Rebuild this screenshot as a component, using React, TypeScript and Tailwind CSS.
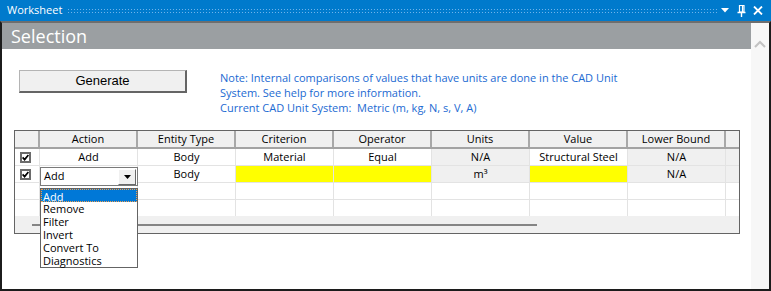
import React from 'react'

const columns = ['Action', 'Entity Type', 'Criterion', 'Operator', 'Units', 'Value', 'Lower Bound']

const actions = ['Add', 'Remove', 'Filter', 'Invert', 'Convert To', 'Diagnostics']

type CellData = { text: string; bg: string }

const rows: { checked: boolean; cells: CellData[]; extra: string }[] = [
  {
    checked: true,
    cells: [
      { text: 'Add', bg: 'bg-white' },
      { text: 'Body', bg: 'bg-white' },
      { text: 'Material', bg: 'bg-white' },
      { text: 'Equal', bg: 'bg-white' },
      { text: 'N/A', bg: 'bg-[#f0f0f0]' },
      { text: 'Structural Steel', bg: 'bg-white' },
      { text: 'N/A', bg: 'bg-[#f0f0f0]' },
    ],
    extra: 'bg-[#f0f0f0]',
  },
  {
    checked: true,
    cells: [
      { text: '', bg: 'bg-white' },
      { text: 'Body', bg: 'bg-white' },
      { text: '', bg: 'bg-[#ffff00]' },
      { text: '', bg: 'bg-[#ffff00]' },
      { text: 'm³', bg: 'bg-[#f0f0f0]' },
      { text: '', bg: 'bg-[#ffff00]' },
      { text: 'N/A', bg: 'bg-[#f0f0f0]' },
    ],
    extra: 'bg-[#f0f0f0]',
  },
  { checked: false, cells: columns.map(() => ({ text: '', bg: 'bg-white' })), extra: 'bg-white' },
  { checked: false, cells: columns.map(() => ({ text: '', bg: 'bg-white' })), extra: 'bg-white' },
]

function CheckBox() {
  return (
    <div className="w-[11px] h-[11px] border-2 border-[#6b6b6b] bg-white flex items-center justify-center">
      <svg width="7" height="7" viewBox="0 0 7 7">
        <path d="M0.6 3.4 L2.6 5.6 L6.4 1" stroke="#000" strokeWidth="1.7" fill="none" />
      </svg>
    </div>
  )
}

function App() {
  return (
    <div className="w-[771px] h-[291px] flex flex-col bg-white overflow-hidden font-['Open_Sans',sans-serif] text-[11px] text-black">
      {/* Title bar */}
      <div className="h-[21px] bg-[#007acc] flex items-center text-white shrink-0">
        <span className="pl-[7px] text-[11px]">Worksheet</span>
        <div className="flex-1 h-[5px] ml-[5px] mr-[4px] bg-[radial-gradient(#6fb3ea_0.7px,transparent_0.8px)] bg-[length:3px_3px]" />
        <svg width="8" height="5" viewBox="0 0 8 5" className="mr-[8px]">
          <path d="M0 0 H8 L4 4.5 Z" fill="#fff" />
        </svg>
        <svg width="9" height="12" viewBox="0 0 9 12" className="mr-[7px]">
          <path d="M2.5 0.5 H7 V7 H2.5 Z M5.5 0.5 V7" stroke="#fff" strokeWidth="1.2" fill="none" />
          <path d="M0.5 7.5 H8.5 M4.5 7.5 V12" stroke="#fff" strokeWidth="1.4" fill="none" />
        </svg>
        <svg width="10" height="9" viewBox="0 0 10 9" className="mr-[8px]">
          <path d="M1 0.5 L9 8.5 M9 0.5 L1 8.5" stroke="#fff" strokeWidth="1.8" fill="none" />
        </svg>
      </div>

      <div className="flex-1 flex border-2 border-[#1c1c1c] border-t-[#6e6e6e] min-h-0">
        <div className="flex-1 flex flex-col">
          {/* Section header */}
          <div className="h-[26px] bg-[#9b9fa2] flex items-center pl-[9px] text-white text-[18px] shrink-0">
            Selection
          </div>

          <div className="flex items-start mt-[21px] ml-[17px] shrink-0">
            <button className="w-[168px] h-[23px] bg-[#f0f0f0] border-l border-t border-[#b4b4b4] border-r-2 border-b-2 border-r-[#656565] border-b-[#656565] font-['Liberation_Sans',Arial,sans-serif] text-[13px] text-black">
              Generate
            </button>
            <div className="ml-[33px] text-[#1b6ad2] leading-[15px] text-[11px]">
              <div>Note: Internal comparisons of values that have units are done in the CAD Unit</div>
              <div>System. See help for more information.</div>
              <div>Current CAD Unit System:&nbsp; Metric (m, kg, N, s, V, A)</div>
            </div>
          </div>

          {/* Grid */}
          <div className="relative ml-[12px] mt-[15px] w-[726px] h-[104px] border border-[#646464] flex flex-col shrink-0">
            <div className="h-[18px] flex bg-[#f0f0f0] border-b-2 border-[#a3a3a3] shrink-0">
              <div className="w-[25px] h-full border-r-2 border-[#a8a8a8]" />
              {columns.map((c) => (
                <div key={c} className="w-[98px] h-full border-r-2 border-[#a8a8a8] flex items-center justify-center">
                  {c}
                </div>
              ))}
              <div className="w-[13px] h-full" />
            </div>

            <div className="flex-1 overflow-hidden">
              {rows.map((r, i) => (
                <div key={i} className="h-[17px] flex">
                  <div className="w-[25px] h-full border-r border-b border-[#e3e3e3] flex items-center pl-[5px]">
                    {r.checked && <CheckBox />}
                  </div>
                  {r.cells.map((c, j) => (
                    <div
                      key={j}
                      className={`w-[98px] h-full border-r border-b border-[#e3e3e3] flex items-center justify-center ${c.bg}`}
                    >
                      {c.text}
                    </div>
                  ))}
                  <div className={`w-[13px] h-full border-b border-[#e3e3e3] ${r.extra}`} />
                </div>
              ))}
            </div>

            <div className="h-[17px] bg-[#f0f0f0] flex items-center pl-[17px] shrink-0">
              <div className="w-[505px] h-[2px] bg-[#858585]" />
            </div>

            {/* Action combobox */}
            <div className="absolute left-[25px] top-[36px] w-[98px] h-[19px] bg-white border border-[#7a7a7a] flex items-center">
              <span className="pl-[3px] flex-1">Add</span>
              <div className="w-[18px] h-[16px] mr-[1px] bg-[#f0f0f0] border-l border-t border-white border-r border-b border-r-[#696969] border-b-[#696969] flex items-center justify-center">
                <svg width="7" height="4" viewBox="0 0 7 4">
                  <path d="M0 0 H7 L3.5 4 Z" fill="#000" />
                </svg>
              </div>
            </div>

            {/* Dropdown list */}
            <div className="absolute left-[25px] top-[57px] w-[98px] h-[80px] bg-white border border-[#646464] z-10 leading-[13px]">
              {actions.map((a, i) => (
                <div
                  key={a}
                  className={
                    i === 0
                      ? 'h-[13px] bg-[#0078d7] text-white pl-[1px] border border-dotted border-[#f0a050]'
                      : 'h-[13px] pl-[2px]'
                  }
                >
                  {a}
                </div>
              ))}
            </div>
          </div>
        </div>

        {/* Vertical scrollbar */}
        <div className="w-[18px] bg-[#f7f7f7] flex justify-center pt-[17px]">
          <svg width="12" height="8" viewBox="0 0 12 8">
            <path d="M1 7 L6 2 L11 7" stroke="#c2c2c2" strokeWidth="2" fill="none" />
          </svg>
        </div>
      </div>
    </div>
  )
}

export default App
